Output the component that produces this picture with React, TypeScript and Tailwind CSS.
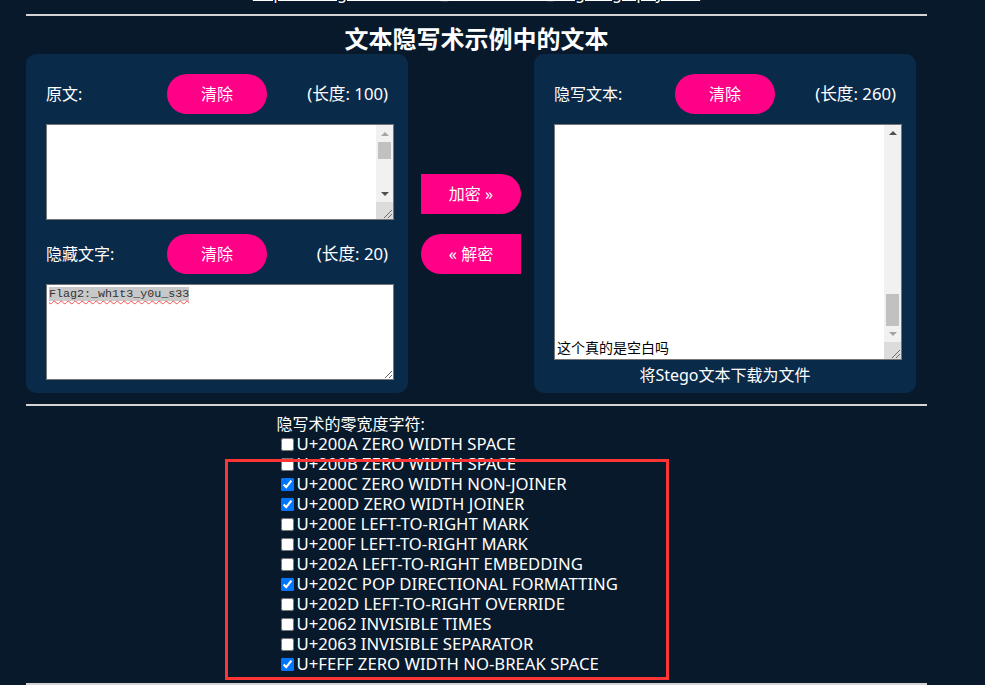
import React, { useEffect, useRef, useState } from "react";

const chars = [
  { code: "U+200A", name: "ZERO WIDTH SPACE", on: false },
  { code: "U+200B", name: "ZERO WIDTH SPACE", on: false },
  { code: "U+200C", name: "ZERO WIDTH NON-JOINER", on: true },
  { code: "U+200D", name: "ZERO WIDTH JOINER", on: true },
  { code: "U+200E", name: "LEFT-TO-RIGHT MARK", on: false },
  { code: "U+200F", name: "LEFT-TO-RIGHT MARK", on: false },
  { code: "U+202A", name: "LEFT-TO-RIGHT EMBEDDING", on: false },
  { code: "U+202C", name: "POP DIRECTIONAL FORMATTING", on: true },
  { code: "U+202D", name: "LEFT-TO-RIGHT OVERRIDE", on: false },
  { code: "U+2062", name: "INVISIBLE TIMES", on: false },
  { code: "U+2063", name: "INVISIBLE SEPARATOR", on: false },
  { code: "U+FEFF", name: "ZERO WIDTH NO-BREAK SPACE", on: true },
];

const font = "font-['Noto_Sans','Noto_Sans_CJK_SC',sans-serif]";

const Arrow = ({ down, color }: { down?: boolean; color: string }) => (
  <div className="flex h-[17px] items-center justify-center">
    <svg width="8" height="4" viewBox="0 0 8 4">
      <path d={down ? "M0 0h8L4 4z" : "M4 0l4 4H0z"} fill={color} />
    </svg>
  </div>
);

const Grip = () => (
  <div className="h-[17px] bg-[#dcdcdc]">
    <svg width="17" height="17" viewBox="0 0 17 17">
      <path d="M16 8L8 16M16 12L12 16" stroke="#6b6b6b" strokeWidth="1" />
    </svg>
  </div>
);

// fake classic scrollbar column (thumb offset / size in px)
const ScrollColumn = ({ thumbTop, thumbHeight, atBottom }: { thumbTop: number; thumbHeight: number; atBottom?: boolean }) => (
  <div className="flex w-[17px] shrink-0 flex-col bg-[#f1f1f1]">
    <Arrow color={atBottom ? "#505050" : "#a3a3a3"} />
    <div className="flex-1">
      <div className="mx-[2px] bg-[#c1c1c1]" style={{ marginTop: thumbTop, height: thumbHeight }} />
    </div>
    <Arrow down color={atBottom ? "#a3a3a3" : "#505050"} />
    <Grip />
  </div>
);

const PanelRow = ({ label, length }: { label: string; length: number }) => (
  <div className="flex h-[40px] items-center justify-between">
    <span className="w-[110px]">{label}</span>
    <button className="h-[40px] w-[100px] rounded-full bg-[#ff0087] text-white">清除</button>
    <span className="w-[110px] text-right text-[16.7px]">(长度: {length})</span>
  </div>
);

const App = () => {
  const [checked, setChecked] = useState(chars.map((c) => c.on));
  const stegoRef = useRef<HTMLTextAreaElement>(null);

  useEffect(() => {
    if (stegoRef.current) stegoRef.current.scrollTop = stegoRef.current.scrollHeight;
  }, []);

  const boxCls = "flex w-[348px] border border-[#767676] bg-white";
  const areaCls =
    "block flex-1 resize-none overflow-hidden bg-white text-black outline-none px-[2px] py-[2px]";

  return (
    <div className={`min-h-[685px] bg-[#08192b] text-white ${font} text-[16px]`}>
      <div className="ml-[26px] w-[901px]">
        {/* link cut off at the top of the scrolled page */}
        <div className="flex h-[4px] items-end justify-center overflow-hidden">
          <a className="text-[15.4px] leading-[20px] underline underline-offset-[1px]">
            http://330k.github.io/misc_tools/unicode_steganography.html
          </a>
        </div>
        <div className="mt-[10px] h-[2px] bg-[#d4d4d4]" />

        <h1 className="mt-[8px] text-center text-[24px] font-bold leading-[30px]">文本隐写术示例中的文本</h1>

        <div className="flex">
          <div className="h-[339px] w-[382px] rounded-[10px] bg-[#0a2a4a] px-[20px] pt-[20px]">
            <PanelRow label="原文:" length={100} />
            <div className={`${boxCls} mt-[10px] h-[96px]`}>
              <textarea className={`${areaCls} text-[13px]`} defaultValue="" spellCheck={false} />
              <ScrollColumn thumbTop={0} thumbHeight={17} />
            </div>
            <div className="mt-[14px]">
              <PanelRow label="隐藏文字:" length={20} />
            </div>
            <div className="mt-[10px] block h-[96px] w-[348px] resize overflow-auto border border-[#767676] bg-white px-[2px] py-[2px] font-['Liberation_Mono',monospace] text-[11.7px] leading-[15px] text-black">
              <span className="bg-[#c8c8c8] text-[#333] underline decoration-[#ff4b4b] decoration-wavy decoration-1 underline-offset-[3px]">
                Flag2:_wh1t3_y0u_s33
              </span>
            </div>
          </div>

          <div className="flex w-[126px] flex-col items-center justify-center gap-[20px]">
            <button className="h-[40px] w-[100px] rounded-l-[6px] rounded-r-full bg-[#ff0087] text-white">
              加密 »
            </button>
            <button className="h-[40px] w-[100px] rounded-l-full rounded-r-[6px] bg-[#ff0087] text-white">
              « 解密
            </button>
          </div>

          <div className="h-[339px] w-[382px] rounded-[10px] bg-[#0a2a4a] px-[20px] pt-[20px]">
            <PanelRow label="隐写文本:" length={260} />
            <div className={`${boxCls} mt-[10px] h-[236px]`}>
              <textarea
                ref={stegoRef}
                className={`${areaCls} font-['Noto_Sans_CJK_SC',monospace] text-[14px] leading-[20px]`}
                defaultValue={"\n".repeat(60) + "这个真的是空白吗"}
                spellCheck={false}
              />
              <ScrollColumn thumbTop={152} thumbHeight={32} atBottom />
            </div>
            <div className="mt-[4px] text-center leading-[22px]">
              <a>将Stego文本下载为文件</a>
            </div>
          </div>
        </div>

        <div className="mt-[11px] h-[2px] bg-[#d4d4d4]" />

        <div className="relative mx-auto mt-[8px] w-[400px]">
          <div className="leading-[20px]">隐写术的零宽度字符:</div>
          {chars.map((c, i) => (
            <label key={c.code} className="flex h-[20px] items-center text-[16.7px] leading-[20px]">
              <input
                type="checkbox"
                className="ml-[4px] mr-[3px] h-[13px] w-[13px]"
                checked={checked[i]}
                onChange={() => setChecked(checked.map((v, j) => (j === i ? !v : v)))}
              />
              {c.code} {c.name}
            </label>
          ))}
          {/* red annotation box */}
          <div className="pointer-events-none absolute left-[-52px] top-[45px] h-[221px] w-[444px] border-[3px] border-[#ff3434]" />
        </div>

        <div className="mt-[9px] h-[2px] bg-[#d4d4d4]" />
      </div>
    </div>
  );
};

export default App;
